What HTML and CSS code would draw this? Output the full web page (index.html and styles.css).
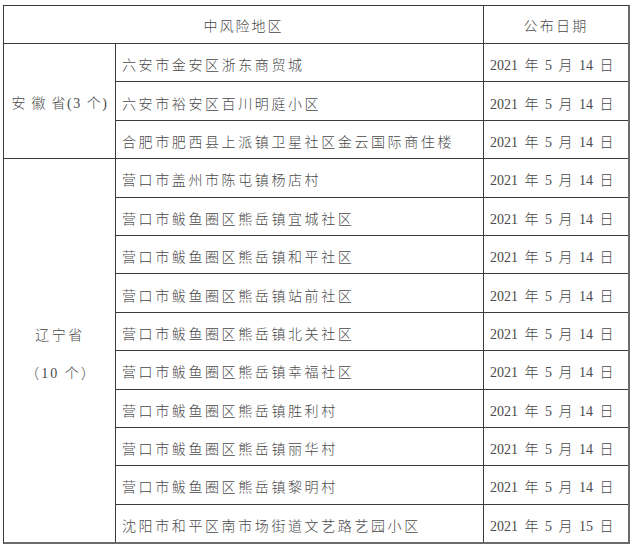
FILE: index.html
```html
<!DOCTYPE html>
<html lang="zh-CN">
<head>
<meta charset="utf-8">
<title>中风险地区</title>
<link rel="stylesheet" href="styles.css">
</head>
<body>
<div class="page">
  <table class="risk">
    <colgroup>
      <col class="c-prov">
      <col class="c-area">
      <col class="c-date">
    </colgroup>
    <thead>
      <tr class="head">
        <th colspan="2" class="th-area">中风险地区</th>
        <th class="th-date last-col">公布日期</th>
      </tr>
    </thead>
    <tbody>
      <tr>
        <td rowspan="3" class="prov"><span class="wide">安徽</span>省(3 个)</td>
        <td class="area">六安市金安区浙东商贸城</td>
        <td class="date last-col">2021 年 5 月 14 日</td>
      </tr>
      <tr>
        <td class="area">六安市裕安区百川明庭小区</td>
        <td class="date last-col">2021 年 5 月 14 日</td>
      </tr>
      <tr>
        <td class="area">合肥市肥西县上派镇卫星社区金云国际商住楼</td>
        <td class="date last-col">2021 年 5 月 14 日</td>
      </tr>
      <tr>
        <td rowspan="10" class="prov last-row prov-ln"><div class="ln">辽宁省</div><div class="ln ln-count">（10 个）</div></td>
        <td class="area">营口市盖州市陈屯镇杨店村</td>
        <td class="date last-col">2021 年 5 月 14 日</td>
      </tr>
      <tr>
        <td class="area">营口市鲅鱼圈区熊岳镇宜城社区</td>
        <td class="date last-col">2021 年 5 月 14 日</td>
      </tr>
      <tr>
        <td class="area">营口市鲅鱼圈区熊岳镇和平社区</td>
        <td class="date last-col">2021 年 5 月 14 日</td>
      </tr>
      <tr>
        <td class="area">营口市鲅鱼圈区熊岳镇站前社区</td>
        <td class="date last-col">2021 年 5 月 14 日</td>
      </tr>
      <tr>
        <td class="area">营口市鲅鱼圈区熊岳镇北关社区</td>
        <td class="date last-col">2021 年 5 月 14 日</td>
      </tr>
      <tr>
        <td class="area">营口市鲅鱼圈区熊岳镇幸福社区</td>
        <td class="date last-col">2021 年 5 月 14 日</td>
      </tr>
      <tr>
        <td class="area">营口市鲅鱼圈区熊岳镇胜利村</td>
        <td class="date last-col">2021 年 5 月 14 日</td>
      </tr>
      <tr>
        <td class="area">营口市鲅鱼圈区熊岳镇丽华村</td>
        <td class="date last-col">2021 年 5 月 14 日</td>
      </tr>
      <tr>
        <td class="area">营口市鲅鱼圈区熊岳镇黎明村</td>
        <td class="date last-col">2021 年 5 月 14 日</td>
      </tr>
      <tr class="final">
        <td class="area last-row">沈阳市和平区南市场街道文艺路艺园小区</td>
        <td class="date last-col last-row">2021 年 5 月 15 日</td>
      </tr>
    </tbody>
  </table>
</div>
</body>
</html>
```

FILE: styles.css
```css
html, body {
  margin: 0;
  padding: 0;
  background: #ffffff;
}

.page {
  padding: 5px 0 0 3px;
}

.risk {
  border-collapse: separate;
  border-spacing: 0;
  table-layout: fixed;
  width: 627px;
  border-top: 1px solid #3a3a3a;
  border-left: 1px solid #3a3a3a;
  border-right: 2px solid #6a6a6a;
  border-bottom: 2px solid #6a6a6a;
  font-family: "Liberation Serif", "Noto Sans CJK SC", serif;
  font-size: 14px;
  font-weight: 300;
  color: #4a4a4a;
}

.c-prov { width: 112px; }
.c-area { width: 368px; }
.c-date { width: 144px; }

.risk th,
.risk td {
  box-sizing: border-box;
  padding: 0;
  border-right: 1px solid #3a3a3a;
  border-bottom: 1px solid #3a3a3a;
  font-weight: 300;
  vertical-align: middle;
  white-space: nowrap;
}

.risk .last-col { border-right: none; }
.risk .last-row { border-bottom: none; }

.head { height: 38px; }
.risk tbody tr { height: 38.4px; }
.risk tbody tr.final { height: 37.4px; }

.th-area {
  text-align: center;
  letter-spacing: 2px;
  padding-left: 2px;
  padding-top: 1px;
}

.th-date {
  text-align: center;
  letter-spacing: 2.3px;
  padding-left: 2px;
  padding-top: 1px;
}

.area {
  text-align: left;
  padding-left: 6px !important;
  padding-top: 3px !important;
  letter-spacing: 2.6px;
}

.date {
  text-align: left;
  padding-left: 6px !important;
  padding-top: 3px !important;
  word-spacing: 3px;
}

.prov {
  text-align: center;
  letter-spacing: 1.5px;
  padding-left: 1px !important;
  padding-top: 2px !important;
}

.prov .wide { letter-spacing: 6px; }

.prov-ln {
  padding-top: 8px !important;
}

.ln {
  line-height: 38px;
  letter-spacing: 2.5px;
}

.ln-count {
  letter-spacing: 2px;
  padding-left: 2px;
}
```
